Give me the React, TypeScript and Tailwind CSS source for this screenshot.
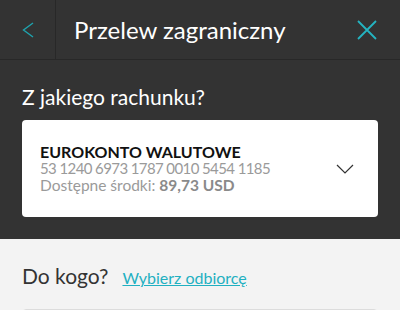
export default function App() {
  return (
    <div className="w-[400px] h-[310px] overflow-hidden bg-[#f3f3f3] font-['Lato',sans-serif]">
      <div className="bg-[#333333]">
        {/* Header */}
        <div className="flex h-[60px] items-stretch border-b border-[#282828]">
          <div className="flex w-[56px] items-center justify-center border-r border-[#282828]">
            <svg width="12" height="16" viewBox="0 0 12 16" className="text-[#1fa3ae]">
              <path d="M11 1 L1.5 8 L11 15" fill="none" stroke="currentColor" strokeWidth="1.4" />
            </svg>
          </div>
          <div className="flex flex-1 items-center pl-[18px] text-[24px] text-white">Przelew zagraniczny</div>
          <div className="flex items-center pr-[23px]">
            <svg width="20" height="20" viewBox="0 0 20 20" className="text-[#24b4c1]">
              <path d="M1 1 L19 19 M19 1 L1 19" fill="none" stroke="currentColor" strokeWidth="1.8" />
            </svg>
          </div>
        </div>
        <div className="px-[22px] pt-[24px] pb-[22px]">
          <h2 className="text-[21px] leading-[26px] text-white">Z jakiego rachunku?</h2>
          <div className="mt-[10px] flex h-[97px] items-center justify-between rounded-[4px] bg-white pl-[18px] pr-[24px]">
            <div>
              <div className="text-[16px] leading-[17px] font-bold text-[#111]">EUROKONTO WALUTOWE</div>
              <div className="text-[15px] leading-[17px] tracking-[-0.6px] text-[#9a9a9a]">53 1240 6973 1787 0010 5454 1185</div>
              <div className="text-[15.5px] leading-[17px] text-[#9a9a9a]">
                Dostępne środki: <span className="font-bold text-[#8a8a8a]">89,73 USD</span>
              </div>
            </div>
            <svg width="18" height="10" viewBox="0 0 18 10" className="text-[#333]">
              <path d="M1 1 L9 9 L17 1" fill="none" stroke="currentColor" strokeWidth="1.2" />
            </svg>
          </div>
        </div>
      </div>
      <div className="px-[22px] pt-[21px]">
        <div className="flex items-baseline gap-[14px]">
          <span className="text-[21px] text-[#333]">Do kogo?</span>
          <a className="text-[16px] text-[#1fb0c1] underline">Wybierz odbiorcę</a>
        </div>
        <div className="mt-[17px] h-[40px] rounded-[4px] border border-[#dcdcdc] bg-white" />
      </div>
    </div>
  );
}
